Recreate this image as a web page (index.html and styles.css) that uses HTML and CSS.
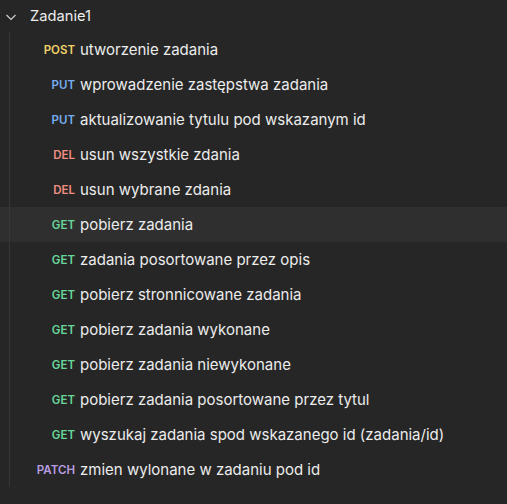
FILE: index.html
```html
<!DOCTYPE html>
<html lang="pl">
<head>
<meta charset="utf-8">
<title>Zadanie1</title>
<link rel="stylesheet" href="styles.css">
</head>
<body>
<div class="tree">
  <div class="folder">
    <svg class="chev" width="12" height="12" viewBox="0 0 12 12"><path d="M1.5 4 L6 8.5 L10.5 4" fill="none" stroke="#cfcfcf" stroke-width="1.2"/></svg>
    <span class="folder-name">Zadanie1</span>
  </div>
  <div class="children">
    <div class="req"><span class="m post">POST</span><span class="name">utworzenie zadania</span></div>
    <div class="req"><span class="m put">PUT</span><span class="name">wprowadzenie zastępstwa zadania</span></div>
    <div class="req"><span class="m put">PUT</span><span class="name">aktualizowanie tytulu pod wskazanym id</span></div>
    <div class="req"><span class="m del">DEL</span><span class="name">usun wszystkie zdania</span></div>
    <div class="req"><span class="m del">DEL</span><span class="name">usun wybrane zdania</span></div>
    <div class="req hover"><span class="m get">GET</span><span class="name">pobierz zadania</span></div>
    <div class="req"><span class="m get">GET</span><span class="name">zadania posortowane przez opis</span></div>
    <div class="req"><span class="m get">GET</span><span class="name">pobierz stronnicowane zadania</span></div>
    <div class="req"><span class="m get">GET</span><span class="name">pobierz zadania wykonane</span></div>
    <div class="req"><span class="m get">GET</span><span class="name">pobierz zadania niewykonane</span></div>
    <div class="req"><span class="m get">GET</span><span class="name">pobierz zadania posortowane przez tytul</span></div>
    <div class="req"><span class="m get">GET</span><span class="name">wyszukaj zadania spod wskazanego id (zadania/id)</span></div>
    <div class="req"><span class="m patch">PATCH</span><span class="name">zmien wylonane w zadaniu pod id</span></div>
  </div>
</div>
</body>
</html>
```
FILE: styles.css
```css
html, body {
  margin: 0;
  padding: 0;
  background: #262626;
  height: 100%;
}
body {
  font-family: Inter, "Noto Sans", sans-serif;
  color: #e8e8e8;
}
.tree {
  width: 507px;
}
.folder {
  height: 32px;
  display: flex;
  align-items: center;
  padding-left: 5px;
}
.chev {
  display: block;
  margin-top: 1px;
}
.folder-name {
  margin-left: 13px;
  font-size: 14.7px;
  color: #ececec;
}
.children {
  position: relative;
}
.children::before {
  content: "";
  position: absolute;
  left: 9px;
  top: 0;
  bottom: 0;
  width: 1px;
  background: #363636;
}
.req {
  height: 35px;
  display: flex;
  align-items: center;
}
.req.hover {
  background: #2f2f2f;
}
.m {
  width: 80px;
  flex: none;
  text-align: right;
  font-size: 11.5px;
  font-weight: 600;
  padding-right: 5px;
  box-sizing: border-box;
}
.post { color: #f0d36a; }
.put { color: #76aef2; }
.del { color: #f08f80; }
.get { color: #68d69a; }
.patch { color: #b89ee0; }
.name {
  font-size: 15px;
  color: #ececec;
}
```
